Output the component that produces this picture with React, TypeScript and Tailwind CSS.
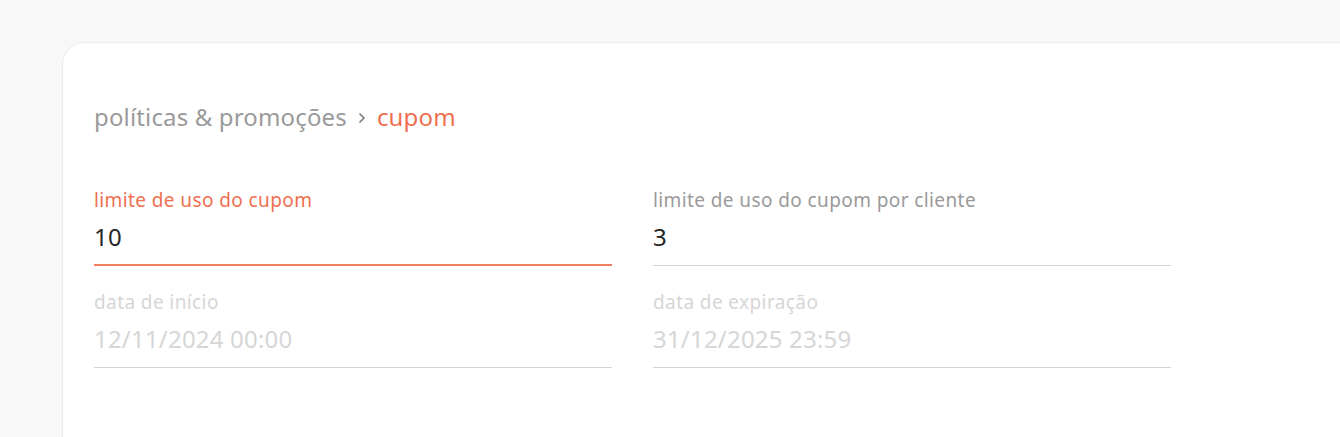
import React from "react";

function Field({
  label,
  value,
  state,
}: {
  label: string;
  value: string;
  state: "focus" | "normal" | "disabled";
}) {
  const labelColor =
    state === "focus" ? "text-[#ef6f50]" : state === "normal" ? "text-[#9a9a9a]" : "text-[#d6d6d6]";
  const valueColor = state === "disabled" ? "text-[#d6d6d6]" : "text-[#262626]";
  const border =
    state === "focus" ? "mt-[13px] border-b-2 border-[#f27c60]" : "mt-[14px] border-b border-[#d4d4d4]";
  return (
    <div className="flex flex-col">
      <div className={`text-[19px] leading-[22px] tracking-[0.4px] ${labelColor}`}>{label}</div>
      <div className={`mt-[12px] text-[24px] leading-[28px] tracking-[0.2px] ${valueColor}`}>{value}</div>
      <div className={border} />
    </div>
  );
}

export default function App() {
  return (
    <div
      className="w-[1340px] h-[437px] bg-[#f8f8f8] pt-[42px] pl-[62px] overflow-hidden"
      style={{ fontFamily: '"Noto Sans", "Lato", sans-serif' }}
    >
      <div className="h-[420px] bg-white rounded-tl-[22px] border-t border-l border-[#ececec] pl-[31px] pt-[59px]">
        <div className="flex items-center text-[24px] leading-[30px] tracking-[0.15px]">
          <span className="text-[#9a9a9a]">políticas &amp; promoções</span>
          <svg
            className="mx-[10px] mt-[2px]"
            width="10"
            height="14"
            viewBox="0 0 10 14"
            fill="none"
          >
            <path d="M3 3l4 4-4 4" stroke="#7a7a7a" strokeWidth="1.7" strokeLinecap="round" strokeLinejoin="round" />
          </svg>
          <span className="text-[#ef6f50]">cupom</span>
        </div>
        <div className="mt-[57px] grid grid-cols-[518px_518px] gap-x-[41px] gap-y-[25px]">
          <Field label="limite de uso do cupom" value="10" state="focus" />
          <Field label="limite de uso do cupom por cliente" value="3" state="normal" />
          <Field label="data de início" value="12/11/2024 00:00" state="disabled" />
          <Field label="data de expiração" value="31/12/2025 23:59" state="disabled" />
        </div>
      </div>
    </div>
  );
}
